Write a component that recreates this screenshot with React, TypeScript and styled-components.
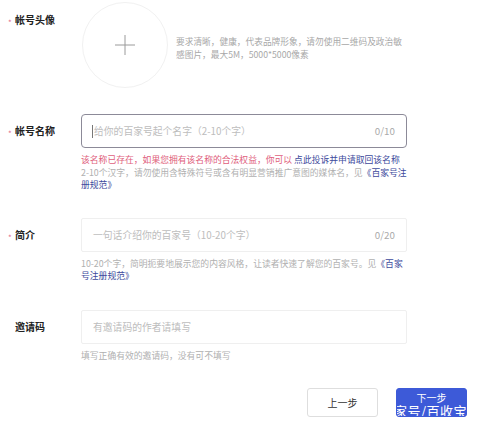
import React from "react";
import styled, { createGlobalStyle } from "styled-components";

const GlobalStyle = createGlobalStyle`
  html, body {
    margin: 0;
    padding: 0;
    background: #ffffff;
  }
  body {
    font-family: "Noto Sans CJK SC", "Noto Sans", sans-serif;
  }
`;

const Page = styled.div`
  width: 499px;
  height: 428px;
  padding: 2px 0 0 8px;
  box-sizing: border-box;
  overflow: hidden;
  position: relative;
`;

const AvatarRow = styled.div`
  display: grid;
  grid-template-columns: 74px auto;
  height: 86px;
`;

const FieldRow = styled.div<{ $gap: number }>`
  display: grid;
  grid-template-columns: 73px 326px;
  margin-top: ${(p) => p.$gap}px;
`;

const Label = styled.div<{ $top?: boolean }>`
  display: flex;
  align-items: center;
  font-size: 10px;
  font-weight: 700;
  color: #222;
  line-height: 14px;
  align-self: ${(p) => (p.$top ? "start" : "center")};
  margin-top: ${(p) => (p.$top ? "11px" : "0")};
  padding-left: 7px;
  position: relative;
`;

const Star = styled.span`
  position: absolute;
  left: 0;
  top: 3px;
  color: #e36a8a;
  font-size: 8px;
  font-weight: 400;
`;

const AvatarBox = styled.div`
  display: flex;
  align-items: center;
  gap: 8px;
`;

const Circle = styled.div`
  width: 86px;
  height: 86px;
  border-radius: 50%;
  border: 1px solid #f1f1f1;
  box-sizing: border-box;
  display: flex;
  align-items: center;
  justify-content: center;
`;

const Desc = styled.div`
  width: 232px;
  font-size: 8.7px;
  line-height: 13px;
  color: #a8a8a8;
  margin-top: 6px;
`;

const InputBox = styled.div<{ $active?: boolean }>`
  height: 34px;
  box-sizing: border-box;
  border: 1px solid ${(p) => (p.$active ? "#8c8a98" : "#efefef")};
  border-radius: ${(p) => (p.$active ? "4px" : "2px")};
  display: flex;
  align-items: center;
  padding: 0 11px 0 11px;
  font-size: 9.8px;
  color: #bdbdbd;
`;

const Cursor = styled.span`
  display: inline-block;
  width: 1px;
  height: 13px;
  background: #777;
  margin-right: 1px;
  margin-left: -1px;
`;

const Placeholder = styled.span`
  flex: 1;
  white-space: nowrap;
`;

const Counter = styled.span`
  font-size: 9.8px;
  color: #aaa;
`;

const Help = styled.div<{ $gap: number }>`
  grid-column: 2;
  margin-top: ${(p) => p.$gap}px;
  font-size: 8.8px;
  line-height: 12.5px;
  color: #b0b0b0;
`;

const Err = styled.span`
  color: #e0607c;
`;

const Link = styled.span`
  color: #3d4a9c;
`;

const Buttons = styled.div`
  display: flex;
  justify-content: flex-end;
  gap: 18px;
  width: 459px;
  margin-top: 26px;
`;

const Button = styled.div<{ $primary?: boolean }>`
  width: 71px;
  height: 29px;
  box-sizing: border-box;
  border-radius: 3px;
  border: 1px solid ${(p) => (p.$primary ? "#3d5ad8" : "#dedede")};
  background: ${(p) => (p.$primary ? "#3d5ad8" : "#ffffff")};
  color: ${(p) => (p.$primary ? "#ffffff" : "#333")};
  font-size: 10px;
  line-height: 12px;
  display: flex;
  justify-content: center;
  padding-top: ${(p) => (p.$primary ? "3px" : "0")};
  align-items: ${(p) => (p.$primary ? "flex-start" : "center")};
  position: relative;
  overflow: hidden;
`;

const Watermark = styled.span`
  position: absolute;
  left: -3px;
  top: 15px;
  font-size: 13px;
  line-height: 14px;
  color: #ffffff;
  white-space: nowrap;
  letter-spacing: 0.5px;
`;

function Plus() {
  return (
    <svg width="22" height="22" viewBox="0 0 22 22">
      <path d="M11 1v20M1 11h20" stroke="#9a9a9a" strokeWidth="1" fill="none" />
    </svg>
  );
}

export default function App() {
  return (
    <>
      <GlobalStyle />
      <Page>
        <AvatarRow>
          <Label $top>
            <Star>*</Star>帐号头像
          </Label>
          <AvatarBox>
            <Circle>
              <Plus />
            </Circle>
            <Desc>
              要求清晰，健康，代表品牌形象，请勿使用二维码及政治敏感图片，最大5M，5000*5000像素
            </Desc>
          </AvatarBox>
        </AvatarRow>

        <FieldRow $gap={26}>
          <Label>
            <Star>*</Star>帐号名称
          </Label>
          <InputBox $active>
            <Cursor />
            <Placeholder>给你的百家号起个名字（2-10个字）</Placeholder>
            <Counter>0/10</Counter>
          </InputBox>
          <Help $gap={6}>
            <Err>该名称已存在，如果您拥有该名称的合法权益，你可以 </Err>
            <Link>点此投诉并申请取回该名称</Link>
            <br />
            2-10个汉字，请勿使用含特殊符号或含有明显营销推广意图的媒体名，见
            <Link>《百家号注册规范》</Link>
          </Help>
        </FieldRow>

        <FieldRow $gap={26}>
          <Label>
            <Star>*</Star>简介
          </Label>
          <InputBox>
            <Placeholder>一句话介绍你的百家号（10-20个字）</Placeholder>
            <Counter>0/20</Counter>
          </InputBox>
          <Help $gap={6}>
            10-20个字，简明扼要地展示您的内容风格，让读者快速了解您的百家号。见
            <Link>《百家号注册规范》</Link>
          </Help>
        </FieldRow>

        <FieldRow $gap={27}>
          <Label>邀请码</Label>
          <InputBox>
            <Placeholder>有邀请码的作者请填写</Placeholder>
          </InputBox>
          <Help $gap={6}>填写正确有效的邀请码，没有可不填写</Help>
        </FieldRow>

        <Buttons>
          <Button>上一步</Button>
          <Button $primary>
            下一步
            <Watermark>家号/百收宝神</Watermark>
          </Button>
        </Buttons>
      </Page>
    </>
  );
}
